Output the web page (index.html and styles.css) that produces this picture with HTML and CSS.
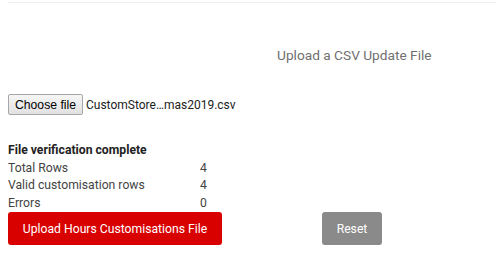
FILE: index.html
```html
<!DOCTYPE html>
<html>
<head>
<meta charset="utf-8">
<link rel="stylesheet" href="styles.css">
</head>
<body>
<div class="page">
  <div class="rule"></div>
  <h2 class="title">Upload a CSV Update File</h2>
  <div class="file-row">
    <span class="file-btn">Choose file</span>
    <span class="file-name">CustomStore…mas2019.csv</span>
  </div>
  <div class="results">
    <div class="heading">File verification complete</div>
    <div class="stat"><span class="label">Total Rows</span><span class="value">4</span></div>
    <div class="stat"><span class="label">Valid customisation rows</span><span class="value">4</span></div>
    <div class="stat"><span class="label">Errors</span><span class="value">0</span></div>
  </div>
  <div class="actions">
    <button class="btn btn-primary">Upload Hours Customisations File</button>
    <button class="btn btn-reset">Reset</button>
  </div>
</div>
</body>
</html>
```
FILE: styles.css
```css
html, body {
  margin: 0;
  padding: 0;
  background: #fff;
}
.page {
  padding: 2px 0 0 8px;
  font-family: Roboto, "Liberation Sans", sans-serif;
  color: #333;
}
.rule {
  height: 1px;
  background: #efefef;
}
.title {
  margin: 42px 0 0 269px;
  font-size: 13.7px;
  font-weight: 400;
  line-height: 20px;
  color: #6f6f6f;
}
.file-row {
  margin-top: 29px;
  display: flex;
  align-items: center;
  gap: 3px;
  height: 21px;
}
.file-btn {
  box-sizing: border-box;
  height: 21px;
  width: 75px;
  display: flex;
  align-items: center;
  justify-content: center;
  font-family: "Liberation Sans", Arial, sans-serif;
  font-size: 12.2px;
  color: #000;
  background: linear-gradient(#f6f6f6, #e1e1e1);
  border: 1px solid #a6a6a6;
  border-radius: 2px;
}
.file-name {
  font-size: 12px;
  color: #222;
}
.results {
  margin-top: 27px;
  font-size: 12.2px;
  line-height: 17.5px;
}
.heading {
  font-weight: 700;
  color: #222;
}
.stat {
  display: grid;
  grid-template-columns: 192px auto;
  color: #444;
}
.actions {
  margin-top: 0;
  display: flex;
  gap: 100px;
}
.btn {
  height: 33px;
  border: none;
  border-radius: 3px;
  font-family: Roboto, "Liberation Sans", sans-serif;
  font-size: 12.2px;
  color: #fff;
  padding: 0;
  white-space: nowrap;
}
.btn-primary {
  width: 214px;
  background: #d90000;
}
.btn-reset {
  width: 60px;
  background: #8a8a8a;
}
```
